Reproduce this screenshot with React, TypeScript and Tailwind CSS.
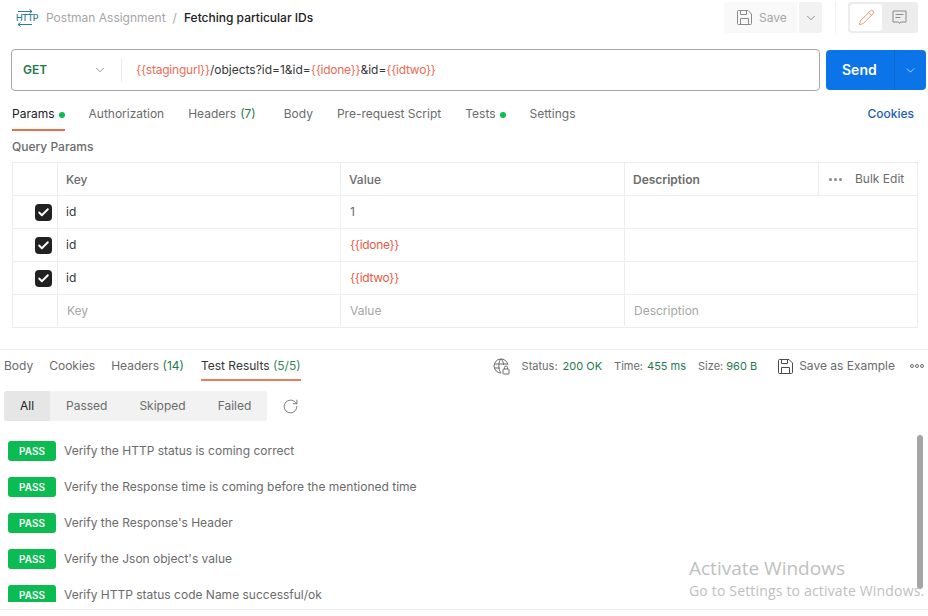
import { ChevronDown, RotateCw, Pencil, Check } from 'lucide-react';

const REQUEST_TABS = [
  { label: 'Params', dot: true, active: true },
  { label: 'Authorization' },
  { label: 'Headers', count: '(7)', extra: true },
  { label: 'Body' },
  { label: 'Pre-request Script' },
  { label: 'Tests', dot: true },
  { label: 'Settings' },
];

const PARAMS = [
  { key: 'id', value: '1', isVar: false },
  { key: 'id', value: '{{idone}}', isVar: true },
  { key: 'id', value: '{{idtwo}}', isVar: true },
];

const TESTS = [
  'Verify the HTTP status is coming correct',
  'Verify the Response time is coming before the mentioned time',
  "Verify the Response's Header",
  "Verify the Json object's value",
  'Verify HTTP status code Name successful/ok',
];

function HttpIcon() {
  return (
    <div className="relative w-[18px] h-[18px] text-[#2f7d93]">
      <svg width="18" height="18" viewBox="0 0 18 18" fill="none" stroke="currentColor" strokeWidth="1" className="absolute inset-0">
        <path d="M2 2.5H16M13.5 0.5L16 2.5L13.5 4.5" />
        <path d="M16 15.5H2M4.5 13.5L2 15.5L4.5 17.5" />
      </svg>
      <span className="absolute inset-x-0 top-[4px] text-center text-[9px] leading-[9px] font-medium tracking-[-0.6px]">HTTP</span>
    </div>
  );
}

function FloppyIcon({ color }: { color: string }) {
  return (
    <svg width="15" height="15" viewBox="0 0 15 15" fill="none" stroke={color} strokeWidth="1">
      <path d="M0.5 1.5a1 1 0 0 1 1-1H11L14.5 4V13.5a1 1 0 0 1-1 1H1.5a1 1 0 0 1-1-1Z" />
      <path d="M3.5 0.5V4.5H9.5V0.5" />
      <path d="M3.5 14.5V8.5H11.5V14.5" />
    </svg>
  );
}

function CommentIcon() {
  return (
    <svg width="15" height="15" viewBox="0 0 15 15" fill="none" stroke="#8a8a8a" strokeWidth="1">
      <path d="M1 1H14V12H8.5L7.5 13.5L6.5 12H1Z" />
      <path d="M3.5 4.5H11.5M3.5 7.5H8.5" />
    </svg>
  );
}

function GlobeLockIcon() {
  return (
    <svg width="17" height="17" viewBox="0 0 17 17" fill="none" stroke="#6b6b6b" strokeWidth="1">
      <path d="M8 15A7 7 0 1 1 15 7" />
      <path d="M1.5 6H14M1.5 10H7" />
      <path d="M8 1C5 4 5 11 8 15M8 1C10 3 10.6 5 10.7 7" />
      <rect x="10" y="11" width="6" height="5" rx="0.5" />
      <path d="M11.5 11V9.5a1.5 1.5 0 0 1 3 0V11" />
    </svg>
  );
}

function Checkbox() {
  return (
    <div className="w-[17px] h-[17px] rounded-[4px] bg-[#212121] flex items-center justify-center">
      <Check size={13} strokeWidth={3.5} className="text-white" />
    </div>
  );
}

export default function App() {
  return (
    <div className="w-[928px] h-[616px] bg-white relative overflow-hidden text-[12px] text-[#6b6b6b] font-['Inter',sans-serif]">
      {/* top bar */}
      <div className="h-[35px] flex items-center pl-[16px] pr-[10px]">
        <HttpIcon />
        <div className="ml-[12px] flex items-center">
          <span className="text-[#a6a6a6]">Postman Assignment</span>
          <span className="text-[#a6a6a6] mx-[7px]">/</span>
          <span className="text-[#212121] font-medium">Fetching particular IDs</span>
        </div>
        <div className="ml-auto flex items-center">
          <div className="w-[73px] h-[31px] bg-[#f9f9f9] rounded-l-[3px] flex items-center pl-[13px] gap-[7px] text-[#a6a6a6]">
            <FloppyIcon color="#8a8a8a" />
            Save
          </div>
          <div className="ml-[2px] w-[23px] h-[31px] bg-[#f2f2f2] rounded-r-[3px] flex items-center justify-center">
            <ChevronDown size={14} strokeWidth={1.25} className="text-[#6b6b6b]" />
          </div>
          <div className="ml-[13px] w-px h-[31px] bg-[#f2f2f2]" />
          <div className="ml-[12px] w-[70px] h-[31px] bg-[#ededed] rounded-[3px] p-[2px] flex">
            <div className="w-[32px] h-[27px] bg-white rounded-[3px] flex items-center justify-center">
              <Pencil size={17} strokeWidth={1} className="text-[#e8714a]" />
            </div>
            <div className="w-[34px] flex items-center justify-center">
              <CommentIcon />
            </div>
          </div>
        </div>
      </div>

      {/* url bar */}
      <div className="mt-[14px] pl-[11px] pr-[2px] flex items-center">
        <div className="w-[809px] h-[42px] border border-[#a6a6a6] rounded-[4px] flex items-center">
          <span className="ml-[11px] w-[70px] font-semibold text-[#1f7a4d]">GET</span>
          <ChevronDown size={14} strokeWidth={1.25} className="text-[#6b6b6b]" />
          <div className="ml-[14px] w-px h-[24px] bg-[#ededed]" />
          <div className="ml-[14px] text-[#212121] opacity-90">
            <span className="text-[#eb5a46] tracking-[-0.22px]">{'{{stagingurl}}'}</span>/objects?id=1&amp;id=
            <span className="text-[#eb5a46] tracking-[-0.25px]">{'{{idone}}'}</span>&amp;id=
            <span className="text-[#eb5a46] tracking-[-0.25px]">{'{{idtwo}}'}</span>
          </div>
        </div>
        <div className="ml-[6px] w-[100px] h-[40px] bg-[#0a74e8] rounded-[4px] flex items-center text-white">
          <span className="w-[68px] pl-[16px] pb-[1px] text-[14px] font-semibold">Send</span>
          <div className="w-px h-full bg-[#0a68d0]" />
          <div className="flex-1 flex items-center justify-center">
            <ChevronDown size={13} strokeWidth={1.25} />
          </div>
        </div>
      </div>

      {/* request tabs */}
      <div className="mt-[12px] h-[28px] pl-[12px] pr-[14px] flex items-start">
        {REQUEST_TABS.map(tab => (
          <div
            key={tab.label}
            className={`h-[28px] pt-[3px] flex items-start leading-[16px] ${tab.extra ? 'mr-[28px]' : 'mr-[24px]'} ${tab.active ? 'border-b-2 border-[#e8714a] text-[#212121]' : ''}`}
          >
            {tab.label}
            {tab.count && <span className="ml-[4px] text-[#1f7a4d]">{tab.count}</span>}
            {tab.dot && <span className="ml-[4px] mt-[6px] w-[6px] h-[6px] rounded-full bg-[#0cbb52]" />}
          </div>
        ))}
        <span className="ml-auto pt-[3px] leading-[16px] font-medium text-[#1d5cb8]">Cookies</span>
      </div>

      <div className="mt-[8px] pl-[12px] h-[16px] leading-[16px] font-medium">Query Params</div>

      {/* params table */}
      <div className="mt-[7px] ml-[12px] w-[906px] border-t border-l border-[#ededed]">
        <div className="h-[33px] flex border-b border-[#ededed]">
          <div className="w-[45px] border-r border-[#ededed]" />
          <div className="w-[283px] border-r border-[#ededed] pl-[8px] pt-[1px] flex items-center font-medium">Key</div>
          <div className="w-[284px] border-r border-[#ededed] pl-[8px] pt-[1px] flex items-center font-medium">Value</div>
          <div className="w-[194px] border-r border-[#ededed] pl-[8px] pt-[1px] flex items-center font-semibold">Description</div>
          <div className="flex-1 border-r border-[#ededed] flex items-center pl-[10px]">
            <span className="flex gap-[2px]">
              <span className="w-[3px] h-[3px] rounded-full bg-[#8a8a8a]" />
              <span className="w-[3px] h-[3px] rounded-full bg-[#8a8a8a]" />
              <span className="w-[3px] h-[3px] rounded-full bg-[#8a8a8a]" />
            </span>
            <span className="ml-[13px]">Bulk Edit</span>
          </div>
        </div>
        {PARAMS.map((param, i) => (
          <div key={i} className="h-[33px] flex border-b border-[#ededed]">
            <div className="w-[45px] border-r border-[#ededed] flex items-center justify-end pr-[5px]">
              <Checkbox />
            </div>
            <div className="w-[283px] border-r border-[#ededed] pl-[8px] flex items-center text-[#212121] opacity-90">{param.key}</div>
            <div className={`w-[284px] border-r border-[#ededed] pl-[9px] flex items-center ${param.isVar ? 'text-[#eb5a46] tracking-[-0.3px]' : ''}`}>
              {param.value}
            </div>
            <div className="flex-1 border-r border-[#ededed]" />
          </div>
        ))}
        <div className="h-[33px] flex border-b border-[#ededed] text-[#a6a6a6] pb-[1px]">
          <div className="w-[45px] border-r border-[#ededed]" />
          <div className="w-[283px] border-r border-[#ededed] pl-[9px] flex items-center">Key</div>
          <div className="w-[284px] border-r border-[#ededed] pl-[9px] flex items-center">Value</div>
          <div className="flex-1 border-r border-[#ededed] pl-[9px] flex items-center">Description</div>
        </div>
      </div>

      {/* response */}
      <div className="mt-[21px] border-t border-[#ededed] h-[261px] border-b flex flex-col relative">
        <div className="h-[31px] flex items-start pl-[4px] pr-[4px]">
          <span className="mt-[8px] leading-[16px]">Body</span>
          <span className="mt-[8px] ml-[16px] leading-[16px]">Cookies</span>
          <span className="mt-[8px] ml-[16px] leading-[16px]">
            Headers <span className="text-[#1f7a4d]">(14)</span>
          </span>
          <span className="ml-[17px] h-[31px] pt-[8px] leading-[16px] border-b-2 border-[#e8714a] text-[#212121] opacity-90">
            Test Results <span className="text-[#1f7a4d]">(5/5)</span>
          </span>
          <div className="ml-auto h-[31px] pt-[1px] flex items-center text-[11px]">
            <GlobeLockIcon />
            <span className="ml-[12px]">Status:</span>
            <span className="ml-[5px] text-[#1f7a4d]">200 OK</span>
            <span className="ml-[12px]">Time:</span>
            <span className="ml-[4px] text-[#1f7a4d]">455 ms</span>
            <span className="ml-[12px]">Size:</span>
            <span className="ml-[3px] text-[#1f7a4d]">960 B</span>
            <span className="ml-[21px]">
              <FloppyIcon color="#4a4a4a" />
            </span>
            <span className="ml-[6px] text-[12px]">Save as Example</span>
            <span className="ml-[15px] flex gap-[1px]">
              <span className="w-[4px] h-[4px] rounded-full border border-[#6b6b6b]" />
              <span className="w-[4px] h-[4px] rounded-full border border-[#6b6b6b]" />
              <span className="w-[4px] h-[4px] rounded-full border border-[#6b6b6b]" />
            </span>
          </div>
        </div>

        <div className="mt-[10px] pl-[4px] flex items-center">
          <div className="w-[263px] h-[30px] bg-[#f2f2f2] rounded-[3px] flex items-center overflow-hidden">
            <div className="w-[46px] h-full bg-[#e6e6e6] text-[#212121] flex items-center justify-center">All</div>
            <span className="ml-[16px]">Passed</span>
            <span className="ml-[32px]">Skipped</span>
            <span className="ml-[32px]">Failed</span>
          </div>
          <RotateCw size={17} strokeWidth={1} className="ml-[15px] text-[#4a4a4a]" />
        </div>

        <div className="mt-[20px] mb-[7px] pl-[8px] flex-1 overflow-hidden flex flex-col gap-[16px]">
          {TESTS.map(test => (
            <div key={test} className="flex items-center shrink-0">
              <span className="w-[48px] h-[20px] rounded-[3px] bg-[#0cbb52] text-white text-[10px] font-semibold flex items-center justify-center">
                PASS
              </span>
              <span className="ml-[8px]">{test}</span>
            </div>
          ))}
        </div>

        {/* scrollbar thumb */}
        <div className="absolute right-[5px] top-[85px] w-[6px] h-[154px] rounded-full bg-[#a6a6a6]" />
      </div>

      {/* windows watermark */}
      <div className="absolute left-[689px] top-[555px] text-[#c0c0c0] font-['Open_Sans',sans-serif] whitespace-nowrap">
        <div className="text-[19px] leading-[26px]">Activate Windows</div>
        <div className="text-[14px] leading-[19px] tracking-[0.17px]">Go to Settings to activate Windows.</div>
      </div>
    </div>
  );
}
